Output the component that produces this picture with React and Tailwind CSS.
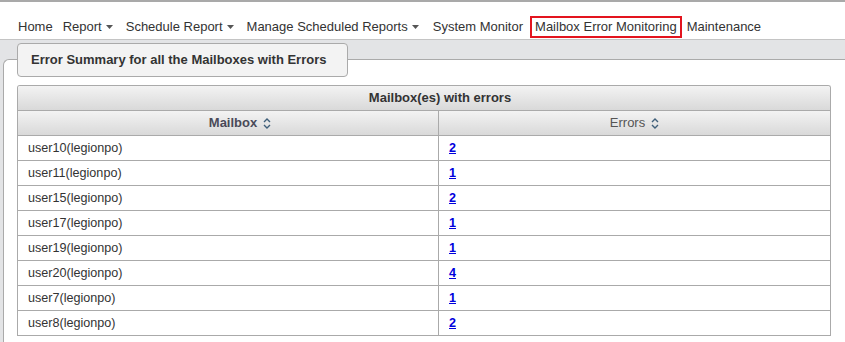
import React from "react";

function Caret() {
  return (
    <svg width="7" height="4" viewBox="0 0 7 4" className="ml-[4px] mr-[3px] mt-[1px]">
      <polygon points="0,0 7,0 3.5,4" fill="#555" />
    </svg>
  );
}

function SortIcon() {
  return (
    <svg width="8" height="11" viewBox="0 0 8 11" className="ml-[6px]">
      <polyline points="1,4 4,1 7,4" fill="none" stroke="#3f5f7a" strokeWidth="1.4" />
      <polyline points="1,7 4,10 7,7" fill="none" stroke="#3f5f7a" strokeWidth="1.4" />
    </svg>
  );
}

const rows = [
  ["user10(legionpo)", "2"],
  ["user11(legionpo)", "1"],
  ["user15(legionpo)", "2"],
  ["user17(legionpo)", "1"],
  ["user19(legionpo)", "1"],
  ["user20(legionpo)", "4"],
  ["user7(legionpo)", "1"],
  ["user8(legionpo)", "2"],
];

export default function App() {
  return (
    <div className="w-[845px] h-[342px] overflow-hidden bg-white font-['Liberation_Sans',Arial,sans-serif] flex flex-col">
      <div className="h-[2px] bg-[#a9a9a9]" />
      <nav className="h-[37px] flex items-center pl-[13px] pt-[12px] text-[13px] text-[#333]">
        <span className="px-[5px]">Home</span>
        <span className="px-[5px] flex items-center">Report<Caret /></span>
        <span className="px-[5px] flex items-center">Schedule Report<Caret /></span>
        <span className="px-[5px] flex items-center">Manage Scheduled Reports<Caret /></span>
        <span className="pl-[6px] pr-[7px]">System Monitor</span>
        <span className="px-[3px] h-[22px] flex items-center border-2 border-[#e3141e]">Mailbox Error Monitoring</span>
        <span className="px-[5px]">Maintenance</span>
      </nav>
      <div className="flex-1 flex flex-col bg-[#e3e4e6] border-t border-[#c4c4c4] pt-[19px] pl-[3px]">
        <div className="flex-1 bg-white border-t border-l border-[#aaaaaa] rounded-tl-[6px]">
          <div className="ml-[13px] -mt-[17px] w-[331px] h-[34px] flex items-center px-[13px] bg-[#f3f3f3] border border-[#aaaaaa] rounded-[4px] text-[13px] font-bold text-[#333]">
            Error Summary for all the Mailboxes with Errors
          </div>
          <div className="ml-[13px] mt-[8px] w-[814px] border-l border-r border-t border-[#aaaaaa] rounded-t-[3px] overflow-hidden">
            <div className="h-[25px] border-b border-[#aaaaaa] bg-gradient-to-b from-[#f3f3f3] to-[#d9d9d9] flex items-center justify-center pl-[32px] text-[13px] font-bold text-[#333]">
              Mailbox(es) with errors
            </div>
            <div className="h-[25px] border-b border-[#aaaaaa] bg-gradient-to-b from-[#f3f3f3] to-[#d9d9d9] grid grid-cols-[421px_1fr] text-[13px]">
              <div className="border-r border-[#aaaaaa] flex items-center justify-center pl-[24px] font-bold text-[#4a4a58]">
                Mailbox<SortIcon />
              </div>
              <div className="flex items-center justify-center text-[#555]">
                Errors<SortIcon />
              </div>
            </div>
            {rows.map(([name, n]) => (
              <div key={name} className="h-[25px] border-b border-[#aaaaaa] grid grid-cols-[421px_1fr] text-[12.6px]">
                <div className="border-r border-[#aaaaaa] flex items-center pl-[10px] text-[#333]">{name}</div>
                <div className="flex items-center pl-[10px]">
                  <a href="#" className="font-bold underline text-[#0000dd]">{n}</a>
                </div>
              </div>
            ))}
          </div>
        </div>
      </div>
    </div>
  );
}
